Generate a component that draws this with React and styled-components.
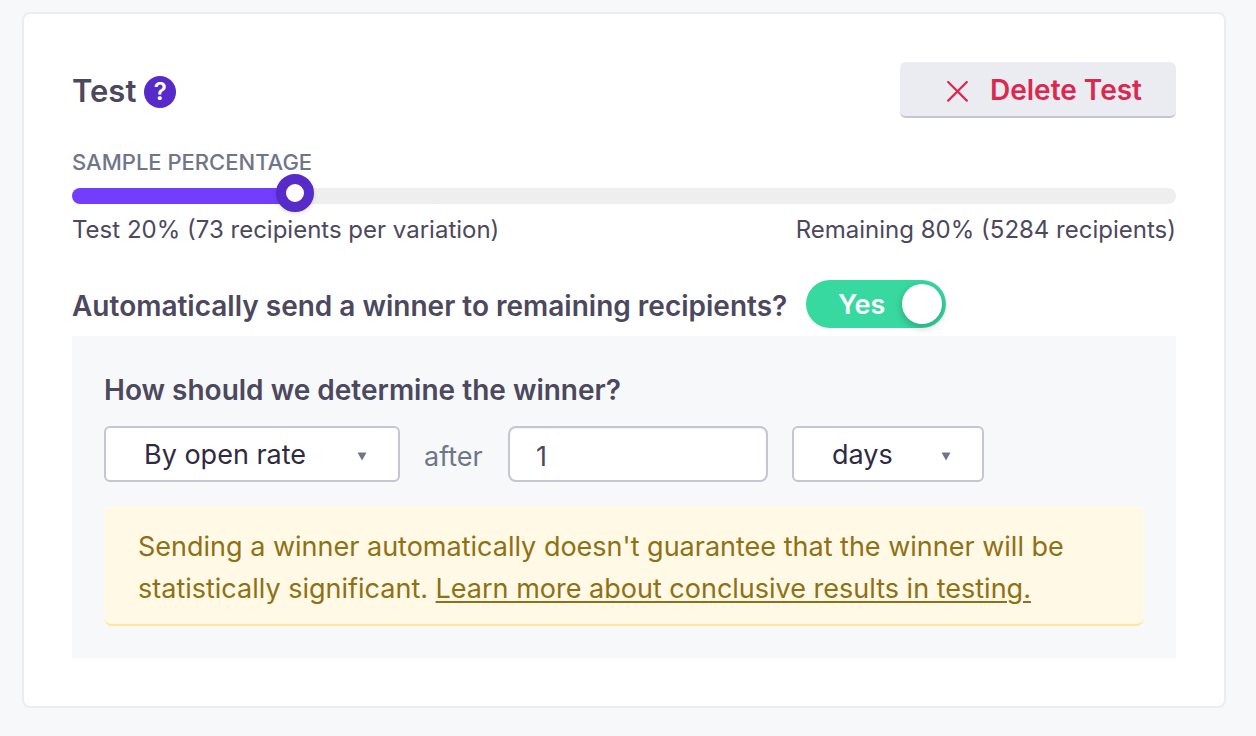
import React, { useState } from "react";
import styled, { createGlobalStyle } from "styled-components";

const GlobalStyle = createGlobalStyle`
  *, *::before, *::after { box-sizing: border-box; }
  body {
    margin: 0;
    background: #f7f8fa;
    color: #4c485e;
    font-family: Inter, "Liberation Sans", sans-serif;
    font-size: 27px;
    -webkit-font-smoothing: antialiased;
  }
  button, input, select { font: inherit; color: inherit; }
`;

const Card = styled.section`
  margin: 12px 30px 28px 22px;
  padding: 48px;
  background: #ffffff;
  border: 2px solid #ebecf2;
  border-radius: 8px;
`;

const Header = styled.header`
  display: flex;
  align-items: center;
  justify-content: space-between;
  height: 56px;
`;

const TitleGroup = styled.div`
  display: flex;
  align-items: center;
  gap: 8px;
  padding-top: 4px;
`;

const Title = styled.h2`
  margin: 0;
  padding-bottom: 2px;
  font-size: 31px;
  line-height: 38px;
  font-weight: 600;
`;

const HelpButton = styled.button`
  width: 32px;
  height: 32px;
  padding: 0;
  border: 0;
  border-radius: 50%;
  background: #562bc9;
  color: #ffffff;
  font-size: 24px;
  line-height: 32px;
  font-weight: 600;
`;

const DeleteButton = styled.button`
  display: flex;
  align-items: center;
  gap: 22px;
  height: 56px;
  padding: 2px 34px 0 46px;
  border: 0;
  border-bottom: 2px solid #c5c5d3;
  border-radius: 6px;
  background: #ebecf2;
  color: #dc284f;
  font-size: 28px;
  font-weight: 600;

  svg {
    margin-top: 2px;
  }
`;

const Sample = styled.div`
  margin-top: 28px;
`;

const SampleLabel = styled.label`
  display: block;
  font-size: 22px;
  line-height: 32px;
  font-weight: 500;
  color: #70758a;
  text-transform: uppercase;
`;

const Track = styled.div`
  display: flex;
  height: 16px;
  margin: 10px 0;
  border-radius: 8px;
  background: linear-gradient(#723efb, #723efb) left / var(--filled) 100% no-repeat #eeeeee;
`;

const Range = styled.input`
  appearance: none;
  flex: 1;
  height: 16px;
  margin: 0 -19px;
  background: transparent;

  &::-webkit-slider-thumb {
    appearance: none;
    width: 38px;
    height: 38px;
    margin-top: -6px;
    border: 10px solid #562bc9;
    border-radius: 50%;
    background: #ffffff;
    box-shadow: 0 2px 4px rgba(0, 0, 0, 0.12);
  }
`;

const Captions = styled.div`
  display: flex;
  justify-content: space-between;
  font-size: 24px;
  line-height: 32px;
`;

const WinnerRow = styled.label`
  display: flex;
  align-items: center;
  gap: 19px;
  height: 48px;
  margin: 34px 0 8px;
  font-size: 28px;
  font-weight: 600;
`;

const WinnerQuestion = styled.span`
  padding-top: 4px;
`;

const Switch = styled.span`
  display: flex;
  align-items: center;
  justify-content: flex-end;
  flex-direction: ${(p) => (p.$on ? "row" : "row-reverse")};
  gap: 17px;
  width: 140px;
  height: 48px;
  padding: 4px;
  border-radius: 24px;
  background: ${(p) => (p.$on ? "#38d9a1" : "#c5c5d3")};
  color: #ffffff;
  font-size: 27px;

  &::after {
    content: "";
    width: 40px;
    height: 40px;
    border-radius: 50%;
    background: #ffffff;
    box-shadow: 0 3px 8px rgba(0, 0, 0, 0.25);
  }
`;

const SwitchInput = styled.input`
  position: absolute;
  opacity: 0;
`;

const Panel = styled.div`
  padding: 32px;
  background: #f7f8fa;
`;

const PanelTitle = styled.h3`
  margin: 0 0 14px;
  font-size: 28px;
  line-height: 44px;
  font-weight: 600;
`;

const Controls = styled.div`
  display: flex;
  align-items: center;
  gap: 24px;
  margin-bottom: 24px;
`;

const SelectBox = styled.div`
  position: relative;
  width: ${(p) => p.$width};
  color: #2f2b42;

  svg {
    position: absolute;
    right: 33px;
    top: 26px;
    pointer-events: none;
  }
`;

const Select = styled.select`
  appearance: none;
  width: 100%;
  height: 56px;
  padding: 0 38px;
  border: 2px solid #c5c5d3;
  border-radius: 6px;
  background: #ffffff;
`;

const After = styled.label`
  min-width: 60px;
  padding-top: 4px;
  color: #70758a;
`;

const AmountInput = styled.input`
  width: 260px;
  height: 56px;
  padding: 4px 26px 0;
  border: 2px solid #c5c5d3;
  border-radius: 8px;
  background: #ffffff;
  box-shadow: inset 0 1px 2px rgba(0, 0, 0, 0.06);
`;

const Notice = styled.p`
  margin: 0;
  padding: 20px 34px 14px;
  border-bottom: 2px solid #fee69a;
  border-radius: 8px;
  background: #fff9e6;
  color: #8f7014;
  line-height: 42px;
`;

const NoticeLink = styled.a`
  color: inherit;
  text-decoration: underline;
  text-decoration-thickness: 2px;
  text-underline-offset: 3px;
`;

function Dropdown({ width, label, options }) {
  return (
    <SelectBox $width={width}>
      <Select aria-label={label}>
        {options.map((o) => (
          <option key={o}>{o}</option>
        ))}
      </Select>
      <svg width="10" height="9" viewBox="0 0 10 9" aria-hidden="true">
        <path d="M0.5 0.5H9.5L5 8.5Z" fill="#70758a" />
      </svg>
    </SelectBox>
  );
}

export default function App() {
  const [sample, setSample] = useState(20.2);
  const [auto, setAuto] = useState(true);
  const [amount, setAmount] = useState("1");
  const percent = Math.round(sample);

  return (
    <>
      <GlobalStyle />
      <Card>
        <Header>
          <TitleGroup>
            <Title>Test</Title>
            <HelpButton type="button">?</HelpButton>
          </TitleGroup>
          <DeleteButton type="button">
            <svg width="22" height="22" viewBox="0 0 22 22" fill="none" stroke="currentColor" strokeWidth="2.2" strokeLinecap="round" aria-hidden="true">
              <path d="M2.2 2L20.8 20.6M20.8 2L2.2 20.6" />
            </svg>
            Delete Test
          </DeleteButton>
        </Header>

        <Sample>
          <SampleLabel htmlFor="sample">Sample percentage</SampleLabel>
          <Track style={{ "--filled": `${sample}%` }}>
            <Range
              id="sample"
              type="range"
              min="0"
              max="100"
              step="any"
              value={sample}
              onChange={(e) => setSample(Number(e.target.value))}
            />
          </Track>
          <Captions>
            <span>Test {percent}% (73 recipients per variation)</span>
            <span>Remaining {100 - percent}% (5284 recipients)</span>
          </Captions>
        </Sample>

        <WinnerRow>
          <WinnerQuestion>Automatically send a winner to remaining recipients?</WinnerQuestion>
          <SwitchInput type="checkbox" checked={auto} onChange={(e) => setAuto(e.target.checked)} />
          <Switch $on={auto}>{auto ? "Yes" : "No"}</Switch>
        </WinnerRow>

        <Panel>
          <PanelTitle>How should we determine the winner?</PanelTitle>
          <Controls>
            <Dropdown width="296px" label="Winning metric" options={["By open rate", "By click rate"]} />
            <After htmlFor="amount">after</After>
            <AmountInput id="amount" type="text" value={amount} onChange={(e) => setAmount(e.target.value)} />
            <Dropdown width="192px" label="Time unit" options={["days", "hours"]} />
          </Controls>
          <Notice>
            Sending a winner automatically doesn't guarantee that the winner will be statistically significant.{" "}
            <NoticeLink href="#conclusive-results">Learn more about conclusive results in testing.</NoticeLink>
          </Notice>
        </Panel>
      </Card>
    </>
  );
}
